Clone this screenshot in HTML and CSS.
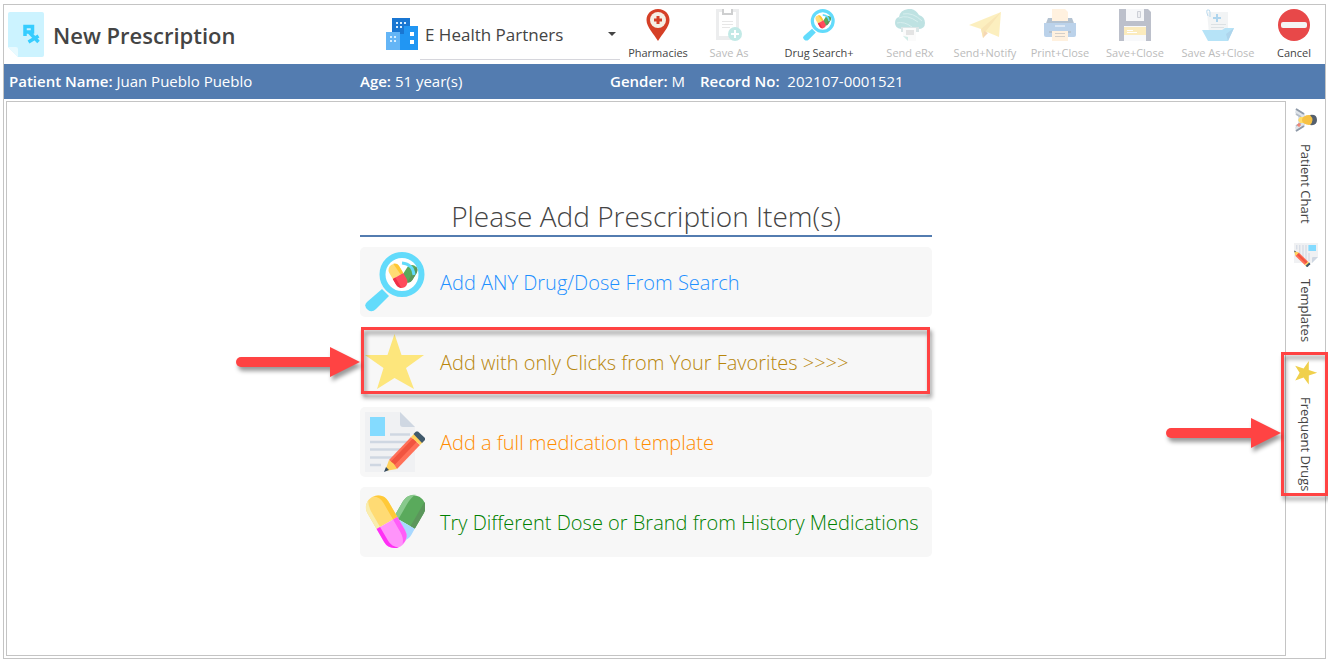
FILE: index.html
```html
<!DOCTYPE html>
<html lang="en">

<head>
    <meta charset="UTF-8">
    <meta name="viewport" content="width=device-width, initial-scale=1.0">
    <title>New Prescription</title>
    <link rel="stylesheet" href="styles.css">
</head>

<body>
    <!-- shared drawings -->
    <svg class="sprite" aria-hidden="true">
        <symbol id="search" viewBox="0 0 60 60">
            <path d="M17 37 L24 44 L11 57 Q7 61 3 58 Q-2 54 2 50 Z" fill="#62dbfb"/>
            <circle cx="37" cy="22.500" r="19.500" fill="#fff" stroke="#62dbfb" stroke-width="6"/>
            <g transform="rotate(32 44 22)">
                <rect x="39" y="12" width="11" height="19" rx="5.500" fill="#5aaa5c"/>
                <path d="M46 12 Q50 13 50 18 V25 Q50 29 47 30 Z" fill="#5b965b"/>
            </g>
            <g transform="rotate(-30 33 24)">
                <path d="M27 24 V17 A6 6 0 0 1 39 17 V24 Z" fill="#ffdb74"/>
                <path d="M35 11 A6 6 0 0 1 39 17 V24 H36 Z" fill="#ffc734"/>
                <path d="M27 24 H39 V31 A6 6 0 0 1 27 31 Z" fill="#ff4b5c"/>
                <path d="M27 24 H30 V36 Q27 34 27 31 Z" fill="#f03048"/>
            </g>
            <path d="M37 11 Q48 12 49 23" fill="none" stroke="#62dbfb" stroke-width="3"/>
        </symbol>
        <symbol id="star" viewBox="0 0 60 60">
            <path d="M29.500 2 L36.500 23 H59 L41 36 L49 57 L29.500 46 L12 57 L18.500 36 L0 23 H22.500 Z" fill="currentColor"/>
        </symbol>
        <symbol id="template" viewBox="0 0 60 60">
            <path d="M0 0 H35 L50 15 V60 H0 Z" fill="#f0f1f3"/>
            <path d="M35 0 L50 15 H38 Q35 15 35 12 Z" fill="#cfd7e2"/>
            <rect x="5" y="5" width="15" height="19" fill="#84dbff"/>
            <path d="M25 22.500 H45 M5 30 H45 M5 37.500 H38 M5 45.500 H32 M5 53 H16" stroke="#cfd7e2" stroke-width="2.600"/>
            <path d="M24 48 L46 25 L55 33 L32 57 Z" fill="#ff7058"/>
            <path d="M27 52 L50 28" stroke="#f1543f" stroke-width="5"/>
            <path d="M46 25 L49 22 L58 30 L55 33 Z" fill="#ffd15c"/>
            <path d="M48.500 22 L51 19.500 H53 L60 26 V28 L57 31 Z" fill="#40596b"/>
            <path d="M24 48 L20 59 L32 57 L29 52 Z" fill="#ffd15c"/>
            <path d="M21 55 L24 58 L19 60 Z" fill="#334a5e"/>
        </symbol>
    </svg>

    <div class="window">
        <header class="header">
            <svg class="page-icon" viewBox="0 0 36 45" aria-hidden="true">
                <path d="M2 0 H34 Q36 0 36 2 V43 Q36 45 34 45 H10 L0 35 V2 Q0 0 2 0 Z" fill="#ccf3ff"/>
                <path d="M0 35 H8 Q10 35 10 37 V45 Z" fill="#e8faff"/>
                <path d="M17 24 V14.500 H24.500 V20 H17 M21 20 L30.500 30 M30.500 24 L20.500 30" fill="none" stroke="#36cdff" stroke-width="3.500"/>
            </svg>
            <h1>New Prescription</h1>
            <div class="practice">
                <svg width="32" height="32" viewBox="0 0 32 32" aria-hidden="true">
                    <path d="M6 0 H24 V16 H6 Z" fill="#1976d2"/>
                    <path d="M18 8 H32 V32 H14 V16 H18 Z" fill="#2196f3"/>
                    <path d="M0 14 H14 V32 H0 Z" fill="#64b5f6"/>
                    <path d="M10 4h2v2h-2z M14 4h2v2h-2z M18 4h2v2h-2z M10 8h2v2h-2z M14 8h2v2h-2z M4 18h2v2h-2z M8 18h2v2h-2z M4 22h2v2h-2z M8 22h2v2h-2z" fill="#d5edff"/>
                    <path d="M24 14h4v4h-4z M24 22h4v4h-4z" fill="#fff"/>
                </svg>
                <div class="practice-select">
                    <select aria-label="Practice">
                        <option>E Health Partners</option>
                    </select>
                </div>
            </div>
            <nav class="toolbar">
                <button type="button">
                    <svg viewBox="0 0 32 32" aria-hidden="true">
                        <path d="M16 0 C9 0 4.500 5 4.500 11 C4.500 18 12 25 16 32 C20 25 27.500 18 27.500 11 C27.500 5 23 0 16 0 Z" fill="#d53f26"/>
                        <circle cx="16" cy="11" r="8" fill="#f5efe4"/>
                        <path d="M16 7 V15 M12 11 H20" stroke="#d53f26" stroke-width="3"/>
                    </svg>
                    Pharmacies
                </button>
                <button type="button" disabled>
                    <svg viewBox="0 0 32 32" aria-hidden="true">
                        <path d="M3 0 H26 V31 H3 Z" fill="#c9ccd0"/>
                        <path d="M6 3 H23 V27 H6 Z" fill="#fff"/>
                        <path d="M9 0 H20 V6 H9 Z" fill="#74777c"/>
                        <path d="M11 0 H18 V4 H11 Z" fill="#fff"/>
                        <path d="M9 12.500 H20 M9 15.500 H20 M9 18.500 H17" stroke="#bbb"/>
                        <circle cx="22" cy="25" r="7" fill="#54c2b8"/>
                        <path d="M22 21 V29 M18 25 H26" stroke="#fff" stroke-width="2"/>
                    </svg>
                    Save As
                </button>
                <button type="button">
                    <svg aria-hidden="true"><use href="#search"/></svg>
                    Drug Search+
                </button>
                <button type="button" disabled>
                    <svg viewBox="0 0 32 32" aria-hidden="true">
                        <path d="M7 20 Q1 19 1 14 Q1 9 5 8 Q6 1 14 0 Q21 -1 25 6 Q31 8 31 14 Q31 20 24 20 Z" fill="#48adaf"/>
                        <path d="M5 9 Q13 5 24 13 M9 5 Q19 3 28 12 M3 14 Q10 12 18 18" fill="none" stroke="#8bd0cf"/>
                        <path d="M7 18 H25 V23 H7 Z" fill="#9bbabd"/>
                        <path d="M9 19 H22 V32 H14 L9 27 Z" fill="#f5f5f5"/>
                        <path d="M12 21 H20 V26 H12 Z" fill="#b5b5b5"/>
                        <path d="M9 27 L14 28 V32 Z" fill="#7fcbbd"/>
                    </svg>
                    Send eRx
                </button>
                <button type="button" disabled>
                    <svg viewBox="0 0 32 32" aria-hidden="true">
                        <path d="M0 16 L32 3 L30 28 L18 23 L14 29 L12 20 Z" fill="#f8d34b"/>
                        <path d="M12 20 L32 3 L17 22 L14 29 Z" fill="#edb62d"/>
                        <path d="M14 29 L15 22 L19 24 Z" fill="#e38f2b"/>
                    </svg>
                    Send+Notify
                </button>
                <button type="button" disabled>
                    <svg viewBox="0 0 32 32" aria-hidden="true">
                        <path d="M4 9 H28 L31 17 H1 Z" fill="#28527d"/>
                        <path d="M8 0 H21 L24 3 V12 H8 Z" fill="#ffd8a5"/>
                        <path d="M0 14 H32 V26 Q32 28 30 28 H2 Q0 28 0 26 Z" fill="#3f7fc6"/>
                        <path d="M11 17 H21" stroke="#fff"/>
                        <path d="M5 23 H27" stroke="#274f79" stroke-width="2"/>
                        <path d="M8 22 H24 V32 H8 Z" fill="#ffd8a5"/>
                        <path d="M11 24.500 H21 M11 27.500 H21" stroke="#877766"/>
                    </svg>
                    Print+Close
                </button>
                <button type="button" disabled>
                    <svg viewBox="0 0 32 32" aria-hidden="true">
                        <path d="M0 0 H29 L32 3 V32 H0 Z" fill="#434d6c"/>
                        <path d="M7 0 H25 V12 H7 Z" fill="#e7e9ee"/>
                        <path d="M18.500 2.500 H21.500 V8.500 H18.500 Z" fill="#d1d4dc" stroke="#737b90"/>
                        <path d="M5 17 H27 V32 H5 Z" fill="#edf0f4"/>
                        <path d="M5 18 H27 V26 H5 Z" fill="#f6c744"/>
                        <path d="M8 21.500 H14 M8 23.500 H18" stroke="#fff"/>
                    </svg>
                    Save+Close
                </button>
                <button type="button" disabled>
                    <svg viewBox="0 0 32 32" aria-hidden="true">
                        <path d="M5 3 H26 V25 H7 Z" fill="#dce1e5"/>
                        <path d="M8 8 V3 Q8 0 5 1 Q4 3 6 7" fill="none" stroke="#3e96cf"/>
                        <path d="M15 5 V13 M11 9 H19" stroke="#1685cc" stroke-width="2"/>
                        <path d="M9 15.500 H24 M9 18.500 H22" stroke="#9eabb3"/>
                        <path d="M0 21 H20 L23 19 H32 L26 32 H6 Z" fill="#31b2ea"/>
                        <path d="M32 19 L26 32 L24 25 Z" fill="#1988c9"/>
                    </svg>
                    Save As+Close
                </button>
                <button type="button">
                    <svg viewBox="0 0 32 32" aria-hidden="true">
                        <circle cx="16" cy="16" r="16" fill="#e84849"/>
                        <rect x="3" y="13" width="26" height="6" rx="2" fill="#f4f4f4"/>
                    </svg>
                    Cancel
                </button>
            </nav>
        </header>

        <div class="patient-bar">
            <span><b>Patient Name:</b> Juan Pueblo Pueblo</span>
            <span><b>Age:</b> 51 year(s)</span>
            <span><b>Gender:</b> M</span>
            <span><b>Record No:</b>&nbsp; 202107-0001521</span>
        </div>

        <div class="content">
            <main class="panel">
                <section class="add-items">
                    <h2>Please Add Prescription Item(s)</h2>
                    <button type="button" class="item search">
                        <svg aria-hidden="true"><use href="#search"/></svg>
                        Add ANY Drug/Dose From Search
                    </button>
                    <button type="button" class="item favorites">
                        <svg aria-hidden="true"><use href="#star"/></svg>
                        <span>Add with only Clicks from Your Favorites &gt;&gt;&gt;&gt;</span>
                        <i class="highlight"></i>
                        <i class="arrow"></i>
                    </button>
                    <button type="button" class="item template">
                        <svg aria-hidden="true"><use href="#template"/></svg>
                        Add a full medication template
                    </button>
                    <button type="button" class="item history">
                        <svg viewBox="0 0 60 60" aria-hidden="true">
                            <g transform="translate(-2 1) rotate(30 43 25)">
                                <path d="M32 24 V12 A12 12 0 0 1 56 12 V30 H32 Z" fill="#5aaa5c"/>
                                <path d="M32 30 V12 Q32 3 40 0 Q37 4 37 13 V30 Z" fill="#88c98c"/>
                                <path d="M51 2 Q56 5 56 12 V30 H51 Z" fill="#5b965b"/>
                                <path d="M32 30 H56 V37 A12 12 0 0 1 32 37 Z" fill="#a8d8ff"/>
                            </g>
                            <g transform="rotate(-30 22 31)">
                                <path d="M10 31 V13 A12 12 0 0 1 34 13 V31 Z" fill="#ffdb74"/>
                                <path d="M10 31 V13 Q10 5 17 2 Q14 7 14 14 V31 Z" fill="#f9edae"/>
                                <path d="M23 1 Q34 3 34 13 V31 H29 V12 Q29 4 23 1 Z" fill="#ffc938"/>
                                <path d="M10 31 H34 V46 A12 12 0 0 1 10 46 Z" fill="#ff94fa"/>
                                <path d="M10 31 H14 V47 Q14 54 20 58 Q10 55 10 46 Z" fill="#ff30f5"/>
                                <path d="M29 31 H34 V46 Q34 55 25 57 Q29 53 29 46 Z" fill="#ff5cf8"/>
                            </g>
                        </svg>
                        Try Different Dose or Brand from History Medications
                    </button>
                </section>
            </main>

            <aside class="side-tabs">
                <button type="button">
                    <svg viewBox="0 0 24 24" aria-hidden="true">
                        <path d="M0 22 L6 13 H18 L24 22 L19 23 L16 20 H8 L5 23 Z" fill="#dfe4ea"/>
                        <path d="M1 22 L6 14 M23 22 L18 14" stroke="#8f9aa8" stroke-width="2"/>
                        <path d="M6 22 L9 17 M18 22 L15 17" stroke="#b4bdc8" stroke-width="2"/>
                        <path d="M9 11 H15 V18 L12 20 L9 18 Z" fill="#ffdc69"/>
                        <ellipse cx="12" cy="9" rx="5" ry="7" fill="#f6c144"/>
                        <path d="M7 8 Q6 1 12 1 Q18 1 17 8 Q12 3 7 8 Z" fill="#55606e"/>
                        <path d="M17 17 V21 M15 19 H19" stroke="#ff7058"/>
                    </svg>
                    Patient Chart
                </button>
                <button type="button">
                    <svg aria-hidden="true"><use href="#template"/></svg>
                    Templates
                </button>
                <button type="button" class="frequent">
                    <svg aria-hidden="true"><use href="#star"/></svg>
                    <span>Frequent Drugs</span>
                    <i class="highlight"></i>
                    <i class="arrow"></i>
                </button>
            </aside>
        </div>
    </div>
</body>

</html>
```
FILE: styles.css
```css
* {
    box-sizing: border-box;
}

body {
    margin: 0;
    padding: 4px 2px 5px 3px;
    min-height: 100vh;
    display: flex;
    font-family: "Open Sans", "Noto Sans", sans-serif;
    color: #444;
    background-color: #fff;
}

button {
    padding: 0;
    border: none;
    background: none;
    color: inherit;
    font-family: inherit;
    cursor: pointer;
}

.sprite {
    position: absolute;
    width: 0;
    height: 0;
}

.window {
    flex: 1;
    display: flex;
    flex-direction: column;
    border: 1px solid #c4c4c4;
}

/* header */
.header {
    display: flex;
    height: 59px;
    padding-left: 4px;
}

.page-icon {
    width: 36px;
    height: 45px;
    margin-top: 7px;
}

h1 {
    flex: 1;
    margin: 0 0 0 9px;
    font-size: 22px;
    line-height: 60px;
    font-weight: 600;
    white-space: nowrap;
}

.practice {
    display: flex;
    gap: 2px;
    padding-top: 13px;
}

.practice-select {
    position: relative;
    width: 200px;
    height: 42px;
    border-bottom: 1px solid #d6d6dc;
}

.practice-select::after {
    content: "";
    position: absolute;
    right: 4px;
    top: 14px;
    border: 4px solid transparent;
    border-top-color: #444;
    border-bottom: none;
}

select {
    width: 100%;
    height: 32px;
    padding: 0 0 0 5px;
    appearance: none;
    border: none;
    background: none;
    color: #444;
    font-family: inherit;
    font-size: 17px;
}

.toolbar {
    display: grid;
    grid-template-columns: 70px 72px 108px 74px 76px 74px 76px 90px 62px;
    margin-left: 3px;
}

.toolbar button {
    display: flex;
    flex-direction: column;
    align-items: center;
    padding-top: 4px;
    font-size: 11px;
    line-height: 24px;
    white-space: nowrap;
}

.toolbar svg {
    width: 32px;
    height: 32px;
}

.toolbar button:disabled {
    color: #bbb;
    cursor: default;
}

.toolbar button:disabled svg {
    opacity: 0.35;
}

/* patient info */
.patient-bar {
    display: grid;
    grid-template-columns: 351px 250px 90px 1fr;
    padding: 0 5px;
    background-color: #537cb0;
    color: #fff;
    font-size: 15px;
    line-height: 35px;
    white-space: nowrap;
}

.patient-bar b {
    font-weight: 600;
}

/* content */
.content {
    flex: 1;
    display: flex;
}

.panel {
    flex: 1;
    margin: 2px 0 2px 2px;
    border: 1px solid #c4c4c4;
}

.add-items {
    display: flex;
    flex-direction: column;
    gap: 10px;
    width: 572px;
    margin: 95px auto 0;
}

h2 {
    margin: 0;
    border-bottom: 2px solid #537cb0;
    font-size: 28px;
    line-height: 38px;
    font-weight: 300;
    text-align: center;
    white-space: nowrap;
}

.item {
    position: relative;
    display: flex;
    align-items: center;
    gap: 15px;
    height: 70px;
    padding: 5px;
    border-radius: 5px;
    background-color: #f7f7f7;
    font-size: 20px;
    font-weight: 300;
    white-space: nowrap;
}

.item svg {
    flex: none;
    width: 60px;
    height: 60px;
}

.item.search {
    color: #1e90ff;
}

.item.favorites {
    color: #b8860b;
}

.item.favorites svg {
    color: #fde67c;
}

.item.template {
    color: #ff8c00;
}

.item.history {
    color: #008000;
}

/* side tabs */
.side-tabs {
    display: flex;
    flex-direction: column;
    gap: 19px;
    width: 39px;
    padding-top: 9px;
}

.side-tabs button {
    position: relative;
    display: flex;
    align-items: center;
    gap: 12px;
    writing-mode: vertical-rl;
    font-size: 13px;
    line-height: 39px;
    white-space: nowrap;
}

.side-tabs svg {
    width: 24px;
    height: 24px;
    transform: rotate(90deg);
}

.frequent svg {
    color: #f0d04c;
}

/* callouts */
.highlight {
    position: absolute;
    border: 3px solid #ff4343;
    filter: drop-shadow(2px 4px 2px rgba(0, 0, 0, 0.4));
}

.favorites .highlight {
    inset: 0 2px 3px 1px;
}

.frequent .highlight {
    inset: -9px -3px -5px -5px;
}

.arrow {
    position: absolute;
    right: 100%;
    width: 124px;
    height: 30px;
    writing-mode: horizontal-tb;
    filter: drop-shadow(2px 4px 2px rgba(0, 0, 0, 0.4));
}

.arrow::before {
    content: "";
    position: absolute;
    left: 0;
    right: 28px;
    top: 10px;
    height: 10px;
    border-radius: 5px 0 0 5px;
    background-color: #ff4343;
}

.arrow::after {
    content: "";
    position: absolute;
    right: 0;
    top: 0;
    border: 15px solid transparent;
    border-left: 30px solid #ff4343;
    border-right: none;
}

.favorites .arrow {
    top: 20px;
}

.frequent .arrow {
    right: 44px;
    width: 115px;
    top: 57px;
}
```
